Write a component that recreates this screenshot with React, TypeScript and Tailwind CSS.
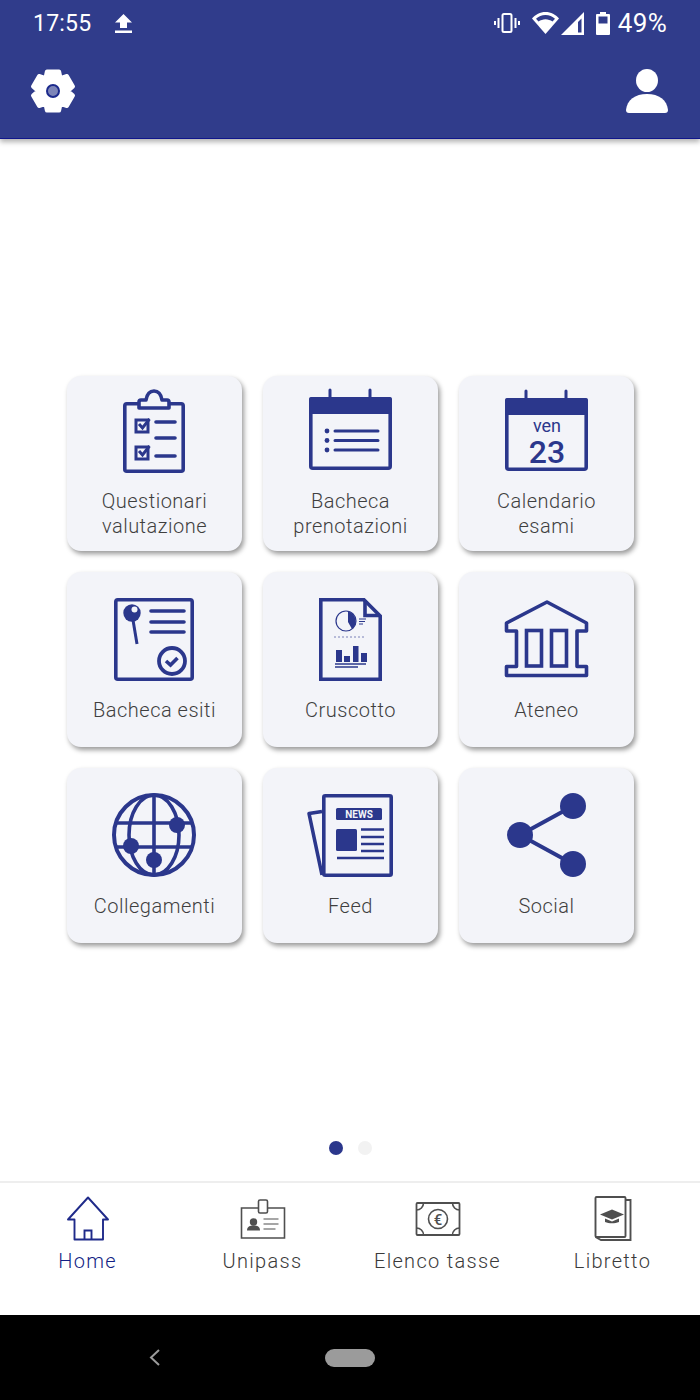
import type { ReactNode } from "react";

const BLUE = "#2b378c";
const CARD = "#f3f4f9";

function CardSvg({ children }: { children: ReactNode }) {
  return (
    <svg viewBox="0 0 175 113" className="block h-[113px] w-[175px]" fill="none" stroke={BLUE} strokeWidth={3.6}>
      {children}
    </svg>
  );
}

function ClipboardIcon() {
  return (
    <CardSvg>
      <rect x="57.8" y="27.8" width="58.4" height="67.4" rx="2" />
      <path
        d="M72 32V26a2 2 0 0 1 2-2h5c1-6 4-9 8-9s7 3 8 9h5a2 2 0 0 1 2 2v6z"
        fill={CARD}
        strokeLinejoin="round"
      />
      <rect x="69" y="44" width="12" height="12" strokeWidth={3} />
      <path d="M72 48l3.5 4 7-9" strokeWidth={3} />
      <rect x="69" y="71" width="12" height="12" strokeWidth={3} />
      <path d="M72 75l3.5 4 7-9" strokeWidth={3} />
      <path d="M89 46h19M89 62h19M89 80h19" strokeLinecap="round" />
    </CardSvg>
  );
}

function CalendarFrame({ top, children }: { top: number; children?: ReactNode }) {
  return (
    <>
      <rect x="47.8" y={top + 1.8} width="79.4" height="69.4" rx="2" />
      <rect x="46" y={top} width="83" height="17" rx="2" fill={BLUE} stroke="none" />
      <path d={`M67 ${top - 7}V${top}M107 ${top - 7}V${top}`} strokeLinecap="round" strokeWidth={3} />
      {children}
    </>
  );
}

function BookingsIcon() {
  return (
    <CardSvg>
      <CalendarFrame top={21} />
      <circle cx="64" cy="55" r="2.4" fill={BLUE} stroke="none" />
      <circle cx="64" cy="64.5" r="2.4" fill={BLUE} stroke="none" />
      <circle cx="64" cy="74" r="2.4" fill={BLUE} stroke="none" />
      <path d="M72 55h43M72 64.5h43M72 74h43" strokeLinecap="round" strokeWidth={3} />
    </CardSvg>
  );
}

function ExamCalendarIcon() {
  return (
    <CardSvg>
      <CalendarFrame top={22} />
      <text x="88" y="56" textAnchor="middle" fontSize="18" fill={BLUE} stroke="none">
        ven
      </text>
      <text x="88" y="87" textAnchor="middle" fontSize="32" fontWeight="500" fill={BLUE} stroke="none">
        23
      </text>
    </CardSvg>
  );
}

function ResultsIcon() {
  return (
    <CardSvg>
      <rect x="48.8" y="27.8" width="76.4" height="79.4" rx="2" />
      <path d="M65.5 45l4.5 27" strokeWidth={3} />
      <circle cx="65" cy="41" r="8.7" fill={BLUE} stroke="none" />
      <circle cx="67.5" cy="37.5" r="3" fill={CARD} stroke="none" />
      <path d="M84 39h33M84 50h33M84 60h33" strokeLinecap="round" />
      <circle cx="105" cy="89" r="13" strokeWidth={3.8} />
      <path d="M99 89l4.5 4 7-7" />
    </CardSvg>
  );
}

function DashboardIcon() {
  return (
    <CardSvg>
      <path d="M57.8 27.8H101L117.2 44V107.2H57.8Z" />
      <path d="M102 28V43.5H117" />
      <circle cx="83" cy="49" r="10" strokeWidth={1.2} />
      <path d="M85 39.5A10 10 0 0 1 89 57L85 50Z" fill={BLUE} stroke="none" />
      <path d="M96 47h7M96 49.5h6M96 52h4" strokeWidth={1} />
      <path d="M71 65h32" strokeWidth={1} strokeDasharray="2 2" opacity={0.6} />
      <rect x="73" y="78" width="6" height="12" fill={BLUE} stroke="none" />
      <rect x="81" y="84" width="6" height="6" fill={BLUE} stroke="none" />
      <rect x="90" y="74" width="5.5" height="16" fill={BLUE} stroke="none" />
      <rect x="98" y="81" width="6" height="9" fill={BLUE} stroke="none" />
      <path d="M72 92h31M72 95h23" strokeWidth={1.5} />
    </CardSvg>
  );
}

function AteneoIcon() {
  return (
    <CardSvg>
      <path
        d="M88 30L127.5 51V59H118V94.5H127.5V103.5H47.5V94.5H57.5V59H47.5V51Z"
        strokeLinejoin="round"
      />
      <rect x="67.5" y="58.5" width="15" height="35.5" />
      <rect x="92.5" y="58.5" width="15" height="35.5" />
    </CardSvg>
  );
}

function GlobeIcon() {
  return (
    <CardSvg>
      <circle cx="87" cy="67" r="40" strokeWidth={4} />
      <ellipse cx="87" cy="67" rx="25" ry="40" />
      <path d="M87 27V107M50 55H124M50 79H124" />
      <circle cx="110" cy="57" r="8" fill={BLUE} stroke="none" />
      <circle cx="64" cy="78" r="8" fill={BLUE} stroke="none" />
      <circle cx="87" cy="92" r="8" fill={BLUE} stroke="none" />
    </CardSvg>
  );
}

function NewsIcon() {
  return (
    <CardSvg>
      <path d="M59 43.5L46 45.5L59 107" strokeLinejoin="round" />
      <rect x="60.8" y="27.8" width="67.4" height="79.4" rx="1.5" strokeLinejoin="round" />
      <rect x="73" y="40" width="46" height="12" rx="1.5" fill={BLUE} stroke="none" />
      <text
        x="96"
        y="49.5"
        textAnchor="middle"
        fontSize="10"
        fontWeight="700"
        fill="#f3f4f9"
        stroke="none"
      >
        NEWS
      </text>
      <rect x="73" y="61" width="21" height="22" rx="1.5" fill={BLUE} stroke="none" />
      <path d="M98 61.5h23M98 69h23M98 76h23M98 83h23M74 90h47" strokeWidth={2.6} />
    </CardSvg>
  );
}

function ShareIcon() {
  return (
    <CardSvg>
      <path d="M114 38L61 67L114 96" strokeWidth={4} />
      <circle cx="114" cy="38" r="13" fill={BLUE} stroke="none" />
      <circle cx="61" cy="67" r="13" fill={BLUE} stroke="none" />
      <circle cx="114" cy="96" r="13" fill={BLUE} stroke="none" />
    </CardSvg>
  );
}

const tiles = [
  { label: ["Questionari", "valutazione"], icon: <ClipboardIcon /> },
  { label: ["Bacheca", "prenotazioni"], icon: <BookingsIcon /> },
  { label: ["Calendario", "esami"], icon: <ExamCalendarIcon /> },
  { label: ["Bacheca esiti"], icon: <ResultsIcon /> },
  { label: ["Cruscotto"], icon: <DashboardIcon /> },
  { label: ["Ateneo"], icon: <AteneoIcon /> },
  { label: ["Collegamenti"], icon: <GlobeIcon /> },
  { label: ["Feed"], icon: <NewsIcon /> },
  { label: ["Social"], icon: <ShareIcon /> },
];

function StatusBar() {
  return (
    <div className="flex h-[46px] items-center pl-[33px] pr-[33px] text-white">
      <span className="w-[82px] text-[23px] leading-none tracking-[0.2px]">17:55</span>
      <svg viewBox="0 0 17 19" className="h-[19px] w-[17px]" fill="white">
        <path d="M8.5 0L17 8.5H12V14H5V8.5H0ZM0 16.5H17V19H0Z" />
      </svg>
      <div className="ml-auto flex items-center">
        <svg viewBox="0 0 26 20" className="h-[20px] w-[26px]" fill="none" stroke="white">
          <rect x="8.5" y="1" width="9" height="18" rx="1.5" strokeWidth={2} />
          <path d="M4.5 5v10M21.5 5v10" strokeWidth={2} />
          <path d="M1 8v4M25 8v4" strokeWidth={2} />
        </svg>
        <svg viewBox="0 0 27 22" className="ml-[12px] h-[22px] w-[27px]">
          <path d="M13.5 22L0 6.5C3.5 2.5 8 0 13.5 0S23.5 2.5 27 6.5Z" fill="white" />
          <path d="M4 6.8C6.5 4.6 9.8 3 13.5 3S20.5 4.6 23 6.8L20.5 9.6C18.5 8.2 16 7.3 13.5 7.3S8.5 8.2 6.5 9.6Z" fill="#303c8b" />
        </svg>
        <svg viewBox="0 0 23 23" className="ml-[2px] h-[23px] w-[23px]">
          <path d="M23 0V23H0Z" fill="white" />
          <path d="M20.5 6.5V20.5H17V10Z" fill="#303c8b" />
        </svg>
        <svg viewBox="0 0 14 23" className="ml-[12px] h-[23px] w-[14px]" fill="white">
          <path d="M4 0H10V2H13A1 1 0 0 1 14 3V22A1 1 0 0 1 13 23H1A1 1 0 0 1 0 22V3A1 1 0 0 1 1 2H4Z" />
          <rect x="2.5" y="4.5" width="9" height="7" fill="#303c8b" />
        </svg>
        <span className="ml-[8px] text-[26px] leading-none tracking-[0.3px]">49%</span>
      </div>
    </div>
  );
}

// six teeth, one pointing straight up
function gearPath() {
  const points: string[] = [];
  for (let i = 0; i < 6; i++) {
    const a = (i * Math.PI) / 3 - Math.PI / 2;
    const steps: [number, number][] = [
      [-0.5, 15.5],
      [-0.3, 20.5],
      [0.3, 20.5],
      [0.5, 15.5],
    ];
    for (const [da, r] of steps) {
      points.push(`${(23 + r * Math.cos(a + da)).toFixed(1)} ${(23 + r * Math.sin(a + da)).toFixed(1)}`);
    }
  }
  return `M${points.join("L")}Z`;
}

function Toolbar() {
  return (
    <div className="flex h-[92px] items-start justify-between pl-[30px] pr-[32px] pt-[22px]">
      <svg viewBox="0 0 46 46" className="h-[46px] w-[46px]">
        <path fill="white" stroke="white" strokeWidth={4} strokeLinejoin="round" d={gearPath()} />
        <circle cx="23" cy="23" r="6" fill="#7d85b8" stroke="#1c2a8c" strokeWidth={2} />
      </svg>
      <svg viewBox="0 0 42 44" className="mt-[1px] h-[44px] w-[42px]" fill="white">
        <ellipse cx="21" cy="11.5" rx="11" ry="11.5" />
        <path d="M0 41C1 31 9 25 21 25S41 31 42 41C42 43 41 44 39 44H3C1 44 0 43 0 41Z" />
      </svg>
    </div>
  );
}

function NavSvg({ color, children }: { color: string; children: ReactNode }) {
  return (
    <svg viewBox="0 0 60 48" className="h-[48px] w-[60px]" fill="none" stroke={color} strokeWidth={1.6}>
      {children}
    </svg>
  );
}

const GRAY = "#4f4f4f";

const navItems = [
  {
    label: "Home",
    active: true,
    icon: (
      <NavSvg color="#1f2a8a">
        <path d="M30 2.5L10 24.5H16.5V44.5H45V24.5H50Z" strokeLinejoin="round" strokeWidth={1.9} />
        <path d="M26.5 44.5V35.5H33.5V44.5" strokeWidth={1.9} />
      </NavSvg>
    ),
  },
  {
    label: "Unipass",
    active: false,
    icon: (
      <NavSvg color={GRAY}>
        <path d="M25 13H8.5V43H51.5V13H35" />
        <rect x="25.5" y="5" width="9" height="13" rx="1.5" />
        <circle cx="20.5" cy="27" r="3.7" fill={GRAY} stroke="none" />
        <path d="M14 35.5c0-4 3-5 6.5-5s6.5 1 6.5 5z" fill={GRAY} stroke="none" />
        <path d="M30.5 24h15M30.5 29h15M30.5 34h12" strokeWidth={1.2} />
      </NavSvg>
    ),
  },
  {
    label: "Elenco tasse",
    active: false,
    icon: (
      <NavSvg color={GRAY}>
        <rect x="8.5" y="8" width="43" height="32" rx="1" strokeWidth={1.8} />
        <path d="M8.5 15a7 7 0 0 0 7-7M44.5 8a7 7 0 0 0 7 7M51.5 33a7 7 0 0 0-7 7M15.5 40a7 7 0 0 0-7-7" />
        <circle cx="30" cy="24" r="9.5" />
        <text x="30" y="29.5" textAnchor="middle" fontSize="15" fontWeight="500" fill={GRAY} stroke="none">
          €
        </text>
      </NavSvg>
    ),
  },
  {
    label: "Libretto",
    active: false,
    icon: (
      <NavSvg color={GRAY}>
        <rect x="12.5" y="2" width="30" height="40" rx="1" strokeWidth={1.9} />
        <path d="M42.5 5H47.5V45H18L12.5 42" strokeWidth={1.9} />
        <path d="M17 19.5L29 14.5L41 19.5L29 24.5Z" fill={GRAY} stroke="none" />
        <path d="M22 23.5V27C26 28.8 32 28.8 36 27V23.5L29 26.5Z" fill={GRAY} stroke="none" />
      </NavSvg>
    ),
  },
];

export default function App() {
  return (
    <div className="flex h-[1400px] w-[700px] flex-col bg-white font-['Roboto',sans-serif]">
      <header className="relative z-10 h-[139px] border-b border-[#10168c] bg-[#303c8b] shadow-[0_3px_5px_rgba(0,0,0,0.3)]">
        <StatusBar />
        <Toolbar />
      </header>

      <main className="flex flex-1 flex-col items-center pt-[237px]">
        <div className="ml-[1px] grid grid-cols-[repeat(3,175px)] gap-[21px]">
          {tiles.map((tile) => (
            <div
              key={tile.label.join(" ")}
              className="h-[175px] w-[175px] rounded-[14px] bg-[#f3f4f9] shadow-[2px_3px_5px_rgba(0,0,0,0.4)]"
            >
              {tile.icon}
              <div className="flex h-[50px] flex-col items-center justify-center text-[20px] font-light leading-[25px] tracking-[0.5px] text-[#3f3f3f]">
                {tile.label.map((line) => (
                  <span key={line}>{line}</span>
                ))}
              </div>
            </div>
          ))}
        </div>

        <div className="mb-[26px] mt-auto flex items-center gap-[15px]">
          <span className="h-[14px] w-[14px] rounded-full bg-[#2b378c]" />
          <span className="h-[14px] w-[14px] rounded-full bg-[#f2f2f2]" />
        </div>
      </main>

      <nav className="grid h-[134px] grid-cols-4 border-t-2 border-[#eeeeee] pt-[12px]">
        {navItems.map((item) => (
          <div key={item.label} className="flex flex-col items-center">
            {item.icon}
            <span
              className={
                item.active
                  ? "mt-[3px] text-[20px] font-light leading-[30px] tracking-[1.3px] text-[#141f85]"
                  : "mt-[3px] text-[20px] font-light leading-[30px] tracking-[1.3px] text-[#3a3a3a]"
              }
            >
              {item.label}
            </span>
          </div>
        ))}
      </nav>

      <div className="flex h-[85px] items-center bg-black pl-[149px]">
        <svg viewBox="0 0 11 17" className="h-[17px] w-[11px]" fill="none" stroke="#9b9b9b" strokeWidth={2}>
          <path d="M10 1L2 8.5L10 16" />
        </svg>
        <span className="ml-[165px] h-[18px] w-[50px] rounded-full bg-[#9b9b9b]" />
      </div>
    </div>
  );
}
